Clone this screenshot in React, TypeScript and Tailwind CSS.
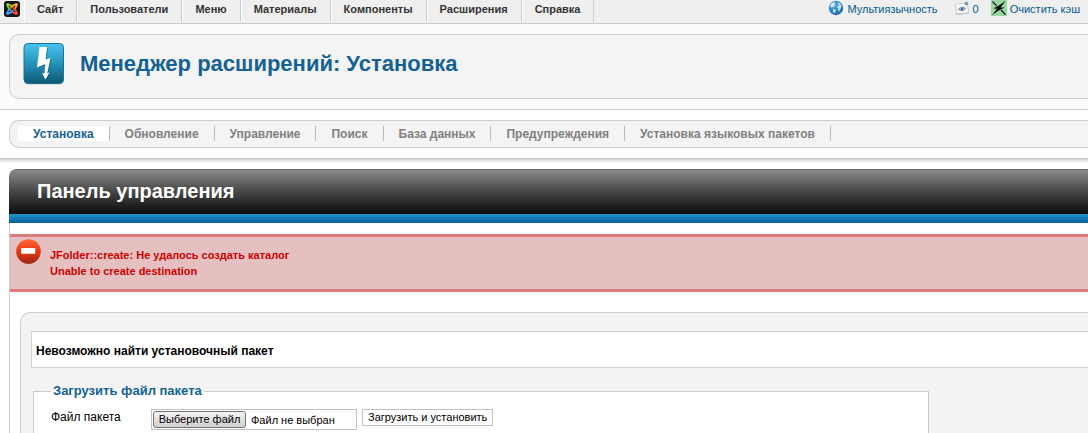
import { useRef, useState } from 'react';

const menuItems = ['Сайт', 'Пользователи', 'Меню', 'Материалы', 'Компоненты', 'Расширения', 'Справка'];

const tabs = [
  'Установка',
  'Обновление',
  'Управление',
  'Поиск',
  'База данных',
  'Предупреждения',
  'Установка языковых пакетов',
];

function JoomlaLogo() {
  const arms = [
    { color: '#7fd02f', angle: 0 },
    { color: '#ffa724', angle: 90 },
    { color: '#ff4b24', angle: 180 },
    { color: '#3f9bff', angle: 270 },
  ];
  return (
    <svg viewBox="0 0 16 16" className="size-4" aria-hidden="true">
      <rect width="16" height="16" rx="3" fill="#161616" />
      {arms.map((arm) => (
        <g key={arm.angle} transform={`rotate(${arm.angle} 8 8)`}>
          <circle cx="3.8" cy="3.8" r="1.8" fill={arm.color} />
          <path
            d="M3.9 4.6 C3.6 6 4.2 6.6 5 7.4 L6.4 8.8 M4.6 3.9 C6 3.6 6.6 4.2 7.4 5"
            fill="none"
            stroke={arm.color}
            strokeWidth="1.9"
            strokeLinecap="round"
          />
        </g>
      ))}
    </svg>
  );
}

function GlobeIcon() {
  return (
    <svg viewBox="0 0 16 16" className="size-4" aria-hidden="true">
      <defs>
        <radialGradient id="globe" cx="0.4" cy="0.3" r="0.8">
          <stop offset="0" stopColor="#62b0e2" />
          <stop offset="0.6" stopColor="#2a80c0" />
          <stop offset="1" stopColor="#1b5f9a" />
        </radialGradient>
      </defs>
      <circle cx="8" cy="8" r="7.2" fill="url(#globe)" />
      <path d="M2.4 5 L4.2 3 L6.6 2.2 L7.2 3.2 L6 4.6 L6.8 5.8 L5.4 6.2 L5.2 7.4 L4 7 L2.6 7.6 Z" fill="#dcedf8" />
      <path d="M5 9.2 L7.2 9.6 L7.8 10.8 L6.8 12 L6.4 13.6 L5.4 12.4 Z" fill="#dcedf8" />
      <path d="M10 2.4 L12 3.4 L13.6 6 L13 7.8 L12.2 9.2 L11.4 11.4 L10.4 10.6 L10.2 8.6 L9.2 7.6 L9.8 6 L11 5.2 L10 4 Z" fill="#c4e0f3" />
    </svg>
  );
}

function MessageIcon() {
  return (
    <svg viewBox="0 0 16 16" className="size-4" aria-hidden="true">
      <path d="M1.5 4 L13.5 3.2 L14.6 13 L2.4 14.4 Z" fill="#f6f6f6" stroke="#cfcfcf" />
      <path d="M2 14.2 L14.6 13.2" stroke="#b9b9b9" />
      <path d="M4.4 9.4 Q7.8 5.4 11.6 8.6 Q8.6 12.4 4.4 9.4 Z" fill="#b9cbdc" stroke="#5c7a9a" strokeWidth="0.8" />
      <circle cx="8" cy="9" r="1.3" fill="#3f6388" />
      <path d="M11 2.4 L13.6 2.2 L13.8 4.8 L11.4 5 Z" fill="#7ba6d0" stroke="#4d7fae" strokeWidth="0.6" />
    </svg>
  );
}

function CacheIcon() {
  return (
    <svg viewBox="0 0 16 16" className="size-4" aria-hidden="true">
      <rect width="16" height="16" fill="#98d8a0" />
      <path d="M14.6 0.8 L9.6 7.4 L13.6 7.4 L6.8 11 L1 15.2 L6 8.8 L2.4 8.6 L8.6 5 Z" fill="#0a0a0a" />
      <path d="M1.4 1.6 L5.6 5.6 M10 10 L14.4 14.6" stroke="#0a0a0a" strokeWidth="1.2" />
    </svg>
  );
}

function InstallIcon() {
  return (
    <svg viewBox="0 0 42 44" className="h-11 w-[42px]" aria-hidden="true">
      <defs>
        <linearGradient id="tile" x1="0" y1="0" x2="0" y2="1">
          <stop offset="0" stopColor="#49c3f1" />
          <stop offset="0.5" stopColor="#2592b8" />
          <stop offset="1" stopColor="#0d5872" />
        </linearGradient>
      </defs>
      <rect x="1" y="3" width="40" height="40" rx="5" fill="#dcdcdc" />
      <rect x="1" y="1.5" width="39.5" height="40" rx="4" fill="url(#tile)" stroke="#1c7391" />
      <path
        d="M17.5 6 L25 6 L23.6 18.5 L28.5 17 L25.3 32 L27.6 31.6 L23.4 38.6 L20 32 L22.4 32.4 L23.4 23 L15 26.5 Z"
        fill="#0d4f68"
        opacity="0.45"
      />
      <path
        d="M16.5 5 L24 5 L22.6 17.5 L27.5 16 L24.3 31 L26.6 30.6 L22.4 37.6 L19 31 L21.4 31.4 L22.4 22 L14 25.5 Z"
        fill="#fff"
      />
    </svg>
  );
}

function ErrorIcon() {
  return (
    <svg viewBox="0 0 26 26" className="size-[25px] shrink-0" aria-hidden="true">
      <defs>
        <linearGradient id="stop" x1="0" y1="0" x2="0" y2="1">
          <stop offset="0" stopColor="#ff6a3c" />
          <stop offset="0.4" stopColor="#ef3f14" />
          <stop offset="1" stopColor="#9c2812" />
        </linearGradient>
      </defs>
      <circle cx="13" cy="13" r="12.8" fill="url(#stop)" />
      <rect x="5.4" y="9.4" width="14.6" height="6" rx="0.6" fill="#fff" />
    </svg>
  );
}

function TopBar() {
  return (
    <header className="flex h-6 items-start justify-between border-b border-[#ccc] bg-[#efefef]">
      <nav className="flex">
        <a href="#home" aria-label="Joomla" className="mr-1 ml-1 pt-px">
          <JoomlaLogo />
        </a>
        {menuItems.map((item) => (
          <a
            key={item}
            href="#menu"
            className="h-[22px] border-r border-l border-r-[#ccc] border-l-white pr-[13px] pl-3 text-[11px] leading-[18px] font-bold text-[#333]"
          >
            {item}
          </a>
        ))}
      </nav>
      <div className="flex text-[11px] leading-[18px] text-[#025a8d]">
        <a href="#lang" className="mr-4 flex gap-[3px]">
          <GlobeIcon />
          Мультиязычность
        </a>
        <a href="#messages" className="mr-3 flex gap-[3px]">
          <MessageIcon />0
        </a>
        <a href="#cache" className="mr-2 flex gap-[3px]">
          <CacheIcon />
          Очистить кэш
        </a>
      </div>
    </header>
  );
}

function UploadForm() {
  const fileRef = useRef<HTMLInputElement>(null);
  const [fileName, setFileName] = useState('Файл не выбран');

  return (
    <fieldset className="ml-0.5 w-[896px] max-w-full flex-1 border border-b-0 border-[#ccc] bg-white px-[17px]">
      <legend className="px-0.5 text-[13px] leading-4 font-bold text-[#146295]">Загрузить файл пакета</legend>
      <div className="flex items-start pt-[10px]">
        <label htmlFor="package" className="w-[100px] text-[12px] leading-4 text-black">
          Файл пакета
        </label>
        <div className="flex h-[21px] w-[206px] items-center border border-[#c0c0c0] px-px">
          <input
            id="package"
            ref={fileRef}
            type="file"
            className="sr-only"
            onChange={(e) => setFileName(e.target.files?.[0]?.name ?? 'Файл не выбран')}
          />
          <button
            type="button"
            onClick={() => fileRef.current?.click()}
            className="h-[17px] w-[93px] rounded-[3px] border border-[#707070] bg-linear-to-b from-[#f4f4f4] to-[#d0d0d0] text-[11px] leading-[15px] whitespace-nowrap text-black"
          >
            Выберите файл
          </button>
          <span className="ml-[5px] truncate text-[11px] leading-4 text-black">{fileName}</span>
        </div>
        <button
          type="button"
          className="ml-[5px] h-[17px] border border-[#c0c0c0] bg-white px-[5px] text-[11px] leading-[15px] whitespace-nowrap text-black"
        >
          Загрузить и установить
        </button>
      </div>
    </fieldset>
  );
}

export default function App() {
  return (
    <div className="flex min-h-screen flex-col bg-white font-['Liberation_Sans',Arial,sans-serif]">
      <TopBar />

      <div className="border-b border-[#d4d4d4] bg-[#fbfbfb] pt-2.5 pb-2.5 pl-[9px]">
        <div className="flex h-[65px] items-start rounded-l-[10px] border border-r-0 border-[#ccc] bg-[#f4f4f4] pt-[7px] pl-[13px]">
          <InstallIcon />
          <h1 className="ml-[15px] pt-[7px] text-[22px] leading-[30px] font-bold text-[#146295]">
            Менеджер расширений: Установка
          </h1>
        </div>
      </div>

      <div className="pt-2.5 pb-2.5 pl-[9px]">
        <nav className="flex h-7 items-start rounded-l-[10px] border border-r-0 border-[#ccc] bg-[#f4f4f4] pt-[5px] pl-2">
          {tabs.map((tab, i) => (
            <a
              key={tab}
              href="#tab"
              className={`h-[15px] border-r border-[#bbb] px-[15px] text-[12px] leading-[16px] font-bold ${
                i === 0 ? 'bg-white text-[#146295]' : 'text-[#808080]'
              }`}
            >
              {tab}
            </a>
          ))}
        </nav>
      </div>
      <div className="h-[5px] bg-linear-to-b from-[#c4c4c4] to-white" />

      <main className="mt-1.5 ml-[9px] flex flex-1 flex-col">
        <h2 className="h-[45px] rounded-tl-[8px] border-t border-[#666] bg-linear-to-b from-[#8a8a8a] to-[#0c0c0c] pl-7 text-[20px] leading-[43px] font-bold text-white">
          Панель управления
        </h2>
        <div className="h-[9px] bg-linear-to-b from-[#2492cd] to-[#07609a]" />

        <div className="flex flex-1 flex-col border-l border-[#ccc] pt-[11px]">
          <div role="alert" className="flex h-[58px] border-y-[3px] border-[#de7a7b] bg-[#e6c0c0] pt-0.5 pl-1.5">
            <ErrorIcon />
            <div className="ml-[9px] pt-2 text-[11px] leading-4 font-bold text-[#c00]">
              <p>JFolder::create: Не удалось создать каталог</p>
              <p>Unable to create destination</p>
            </div>
          </div>

          <section className="mt-5 ml-2.5 flex flex-1 flex-col rounded-tl-[10px] border-t border-l border-[#ccc] bg-[#f3f3f3] pt-[18px] pl-2.5">
            <p className="h-[37px] border border-r-0 border-[#d4d4d4] bg-white pl-1 text-[12px] leading-[38px] font-bold text-black">
              Невозможно найти установочный пакет
            </p>
            <div className="flex flex-1 flex-col pt-[15px]">
              <UploadForm />
            </div>
          </section>
        </div>
      </main>
    </div>
  );
}
